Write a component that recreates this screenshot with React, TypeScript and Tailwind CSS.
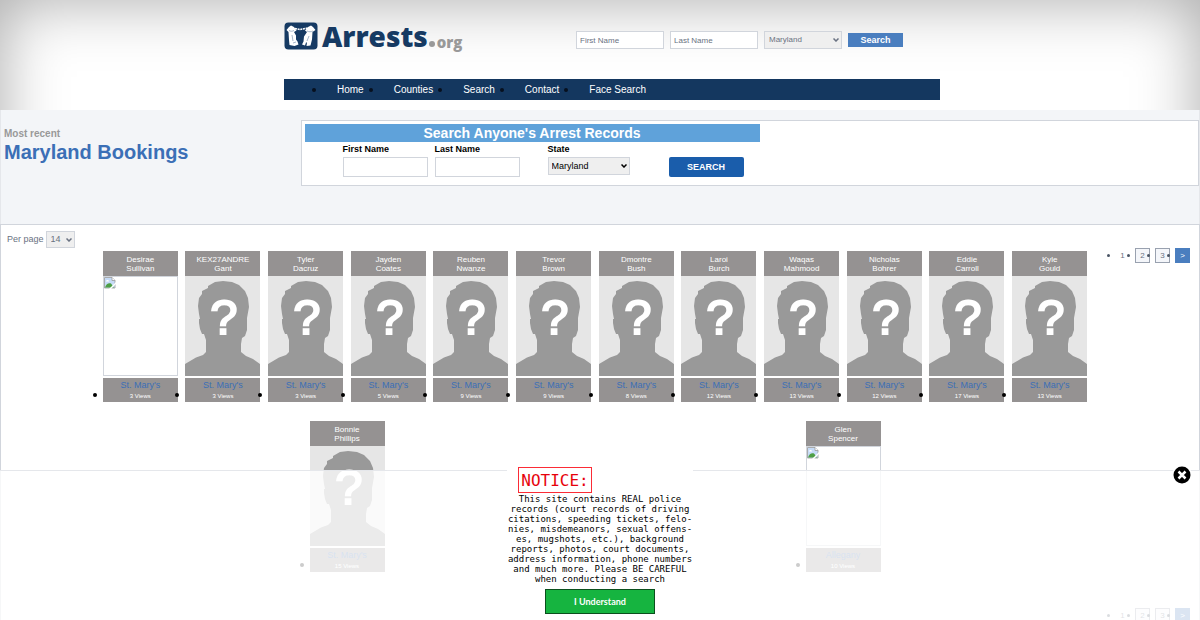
import clsx from 'clsx';

interface Booking {
  first: string;
  last: string;
  county: string;
  views: number;
  missingPhoto?: boolean;
}

const firstRow: Booking[] = [
  { first: 'Desirae', last: 'Sullivan', county: "St. Mary's", views: 3, missingPhoto: true },
  { first: 'KEX27ANDRE', last: 'Gant', county: "St. Mary's", views: 3 },
  { first: 'Tyler', last: 'Dacruz', county: "St. Mary's", views: 3 },
  { first: 'Jayden', last: 'Coates', county: "St. Mary's", views: 5 },
  { first: 'Reuben', last: 'Nwanze', county: "St. Mary's", views: 9 },
  { first: 'Trevor', last: 'Brown', county: "St. Mary's", views: 9 },
  { first: 'Dmontre', last: 'Bush', county: "St. Mary's", views: 8 },
  { first: 'Laroi', last: 'Burch', county: "St. Mary's", views: 12 },
  { first: 'Waqas', last: 'Mahmood', county: "St. Mary's", views: 13 },
  { first: 'Nicholas', last: 'Bohrer', county: "St. Mary's", views: 12 },
  { first: 'Eddie', last: 'Carroll', county: "St. Mary's", views: 17 },
  { first: 'Kyle', last: 'Gould', county: "St. Mary's", views: 13 },
];

const secondRow: Booking[] = [
  { first: 'Bonnie', last: 'Phillips', county: "St. Mary's", views: 15 },
  { first: 'Glen', last: 'Spencer', county: 'Allegany', views: 10, missingPhoto: true },
];

const noticeLines = [
  'This site contains REAL police',
  'records (court records of driving',
  'citations, speeding tickets, felo-',
  'nies, misdemeanors, sexual offens-',
  'es, mugshots, etc.), background',
  'reports, photos, court documents,',
  'address information, phone numbers',
  'and much more. Please BE CAREFUL',
  'when conducting a search',
];

interface SelectProps {
  id: string;
  value: string;
  label?: string;
  className?: string;
}

function Select({ id, value, label, className }: SelectProps) {
  return (
    <span className="relative block">
      <select
        id={id}
        aria-label={label}
        className={clsx('block appearance-none border border-gray-300 bg-[#efefef] font-normal', className)}
      >
        <option>{value}</option>
      </select>
      <svg
        width="6"
        height="4"
        viewBox="0 0 6 4"
        className="pointer-events-none absolute top-1/2 right-[3px] -mt-[2px]"
        aria-hidden="true"
      >
        <path d="m.5.5 2.500 2.500L5.500.5" fill="none" stroke="currentColor" strokeWidth="1.500" />
      </svg>
    </span>
  );
}

function Logo() {
  return (
    <a href="#" className="flex h-7 items-center font-['Open_Sans','Noto_Sans',sans-serif] font-extrabold">
      <svg width="34" height="28" viewBox="0 0 34 28" aria-hidden="true">
        <rect x="0.5" y="0.5" width="33" height="27" rx="4" fill="#163a63" />
        <path d="M2.500 8 5 5l2-1.500L10 5l2.500 3.500L10 10l2 3.500v4l1.500 2 1 3-4 1.500-5-1-.5-5L4.500 10z" fill="#fff" />
        <path d="M31.500 8 29 5l-2-1.500L24 5l-3 3.500 2 1.500-3 4.500-.5 5-1.500 3 3 1 1-3h1l-.5 3.500 4-.5 1.500-6 .5-7.500z" fill="#fff" />
        <path d="M11 6.500 16 7.500l8-1.500" fill="none" stroke="#fff" strokeWidth="1.500" strokeDasharray="2 .7" />
        <path d="M5 8.500c2 1 3 1 5 0M8 13l1 6M23 9c2 1 4 1 6 0M25 14l-2 5M9 21l3-1" fill="none" stroke="#8fa3bb" strokeWidth=".8" />
      </svg>
      <span className="ml-1 text-[28px] leading-7 text-[#163a63]">Arrests</span>
      <span className="mt-4 ml-px h-[6px] w-[6px] rounded-full bg-[#999]" />
      <span className="mt-3 ml-[2px] text-[15px] leading-4 text-[#999]">org</span>
    </a>
  );
}

function Header() {
  return (
    <header className="relative h-[110px] overflow-hidden">
      <div className="absolute inset-x-0 top-0 h-[300px] shadow-[inset_0_0_64px_rgba(0,0,0,0.34)]" />
      <div className="relative mx-auto w-[680px] pt-[22px] pl-6">
        <div className="flex h-[57px] items-start justify-between">
          <Logo />
          <form className="mt-[9px] mr-[37px] flex items-center gap-[6px] text-[8px] text-gray-500">
            <input
              aria-label="First Name"
              placeholder="First Name"
              className="h-[18px] w-[88px] border border-gray-300 bg-white px-[3px] placeholder:text-gray-500"
            />
            <input
              aria-label="Last Name"
              placeholder="Last Name"
              className="h-[18px] w-[88px] border border-gray-300 bg-white px-[3px] placeholder:text-gray-500"
            />
            <Select id="header-state" label="State" value="Maryland" className="h-[18px] w-[78px] px-1 text-[8px]" />
            <button type="button" className="h-[14px] w-[55px] bg-[#4a7ebf] text-[9px] leading-[14px] font-bold text-white">
              Search
            </button>
          </form>
        </div>
        <nav className="bg-[#14375f] text-[10px] leading-[21px] text-white">
          <ul className="flex gap-[30px] pl-[53px]">
            {['Home', 'Counties', 'Search', 'Contact', 'Face Search'].map((item) => (
              <li key={item} className="relative">
                <span className="absolute top-[9px] -left-[25px] h-1 w-1 rounded-full bg-[#06101f]" />
                <a href="#">{item}</a>
              </li>
            ))}
          </ul>
        </nav>
      </div>
    </header>
  );
}

function RecordSearch() {
  return (
    <form className="mt-[10px] h-[66px] flex-1 border border-gray-300 bg-white p-[3px] text-[9px] text-black">
      <h2 className="w-[455px] bg-[#5fa2da] text-center text-[14px] leading-[18px] font-bold text-white">
        Search Anyone's Arrest Records
      </h2>
      <div className="flex items-start pt-px pl-[38px] leading-3">
        <div className="mr-[7px]">
          <label htmlFor="first-name" className="block font-bold">
            First Name
          </label>
          <input id="first-name" className="mt-[2px] block h-5 w-[85px] border border-gray-300 bg-white px-1" />
        </div>
        <div className="mr-7">
          <label htmlFor="last-name" className="block font-bold">
            Last Name
          </label>
          <input id="last-name" className="mt-[2px] block h-5 w-[85px] border border-gray-300 bg-white px-1" />
        </div>
        <div className="mr-[39px]">
          <label htmlFor="state" className="mb-[2px] block font-bold">
            State
          </label>
          <Select id="state" value="Maryland" className="h-[18px] w-[82px] px-[3px] text-[9px]" />
        </div>
        <button type="button" className="mt-[14px] h-5 w-[75px] rounded-[2px] bg-[#1a5dab] font-bold text-white">
          SEARCH
        </button>
      </div>
    </form>
  );
}

function BrokenImage() {
  return (
    <div className="h-[100px] border border-gray-300 bg-white">
      <svg width="12" height="12" viewBox="0 0 12 12" aria-hidden="true">
        <path d="M.5.500h7.500l3 3v7.500H.5z" fill="#c6dbf7" stroke="#999" strokeWidth=".8" />
        <path d="M8 .5v3h3" fill="#fff" stroke="#999" strokeWidth=".8" />
        <path d="M2 4.500c0-2 3-2 3 0z" fill="#fff" />
        <path d="M1 10.500c1-4 4-5 6-4l3 4z" fill="#4e9f45" />
        <path d="M5 12 12 5v2l-5 5z" fill="#fff" />
      </svg>
    </div>
  );
}

function Silhouette() {
  return (
    <svg viewBox="0 0 75 100" className="block h-[100px] w-[75px] bg-[#e6e6e6]" aria-hidden="true">
      <path
        d="M0 100V88L11 81.500 18 79 21 76V64L19 58H17L15 53 14 47V43H15L14 38 13 30 14 22 17 18V15L23 12V10L30 6 38 5 47 6 54 9 60 15 63 22 64 31 62 42 62 54 60 60 57 62 56 68V76L61 80 68 83 75 88V100Z"
        fill="#999"
      />
      <text
        x="39"
        y="58"
        textAnchor="middle"
        className="fill-white stroke-white stroke-2 font-['Liberation_Sans',Arial,sans-serif] text-[49px]"
      >
        ?
      </text>
    </svg>
  );
}

function BookingCard({ booking }: { booking: Booking }) {
  return (
    <li className="relative w-[75px] text-center text-white">
      <span className="absolute top-[142px] -left-[10px] h-1 w-1 rounded-full bg-black" />
      <h3 className="h-[25px] bg-[#959292] pt-1 text-[8px] leading-[9px]">
        {booking.first}
        <br />
        {booking.last}
      </h3>
      {booking.missingPhoto ? <BrokenImage /> : <Silhouette />}
      <div className="mt-[2px] h-6 bg-[#959292] pt-[2px]">
        <a href="#" className="block text-[9px] leading-[11px] text-[#3b6fb6]">
          {booking.county}
        </a>
        <p className="text-[6px] leading-[10px]">{booking.views} Views</p>
      </div>
    </li>
  );
}

function Pagination() {
  return (
    <ul className="flex gap-[5px] text-center text-[8px] leading-[15px] text-gray-500">
      {['1', '2', '3', '>'].map((page) => (
        <li key={page} className="relative">
          <a
            href="#"
            className={clsx(
              'flex h-[15px] w-[15px] items-center justify-center',
              (page === '2' || page === '3') && 'border border-gray-400 bg-[#f4f6fa]',
              page === '>' && 'bg-[#4a7ebf] text-white',
            )}
          >
            {page}
          </a>
          <span className="absolute top-[6px] -left-2 h-[3px] w-[3px] rounded-full bg-gray-600" />
        </li>
      ))}
    </ul>
  );
}

function Notice() {
  return (
    <div className="fixed inset-x-0 bottom-0 h-[150px] border-t border-gray-200 bg-white/80">
      <div className="relative mx-auto -mt-1 h-[154px] w-[186px] bg-white">
        <h2 className="ml-[11px] h-[26px] w-[74px] border border-red-500 text-center font-['DejaVu_Sans_Mono',monospace] text-[16px] leading-[25px] text-red-600">
          NOTICE:
        </h2>
        <p className="pt-px text-center font-['DejaVu_Sans_Mono',monospace] text-[9px] leading-[10px] whitespace-nowrap text-black">
          {noticeLines.map((line) => (
            <span key={line} className="block">
              {line}
            </span>
          ))}
        </p>
        <button
          type="button"
          className="mx-auto mt-[5px] block h-[25px] w-[110px] border border-[#0b4f1d] bg-[#16b440] font-['Lato',sans-serif] text-[9px] font-bold text-white"
        >
          I Understand
        </button>
      </div>
      <button type="button" aria-label="Close" className="absolute -top-[6px] right-2">
        <svg width="20" height="20" viewBox="0 0 20 20" className="block">
          <circle cx="10" cy="10" r="10" fill="#fff" />
          <circle cx="10" cy="10" r="8.500" fill="#000" />
          <path d="m6.500 6.500 7 7m0-7-7 7" stroke="#fff" strokeWidth="2.500" />
        </svg>
      </button>
    </div>
  );
}

export default function App() {
  return (
    <div className="h-screen overflow-hidden bg-white font-['Liberation_Sans',Arial,sans-serif]">
      <Header />
      <section className="flex h-[114px] border-x border-gray-200 bg-[#f3f5f8]">
        <div className="w-1/4 pt-[18px] pl-[3px] font-bold">
          <p className="text-[10px] leading-3 text-[#999]">Most recent</p>
          <h1 className="text-[20px] leading-6 text-[#3b6fb6]">Maryland Bookings</h1>
        </div>
        <RecordSearch />
      </section>
      <main className="border border-gray-300 pb-10">
        <div className="flex">
          <div className="flex-1">
            <div className="flex items-center gap-[2px] pt-[6px] pl-[6px] text-[9px] text-gray-500">
              <label htmlFor="per-page">Per page</label>
              <Select id="per-page" value="14" className="h-[17px] w-[29px] pl-1 text-[9px]" />
            </div>
            <div className="mt-[3px] pl-[98px]">
              <ul className="grid grid-cols-12 justify-items-center">
                {firstRow.map((booking) => (
                  <BookingCard key={booking.first} booking={booking} />
                ))}
              </ul>
              <ul className="mt-[19px] grid grid-cols-2 justify-items-center">
                {secondRow.map((booking) => (
                  <BookingCard key={booking.first} booking={booking} />
                ))}
              </ul>
            </div>
          </div>
          <div className="flex w-[108px] justify-end pt-[23px] pr-[9px]">
            <Pagination />
          </div>
        </div>
        <div className="mt-9 flex justify-end pr-[9px]">
          <Pagination />
        </div>
      </main>
      <Notice />
    </div>
  );
}
